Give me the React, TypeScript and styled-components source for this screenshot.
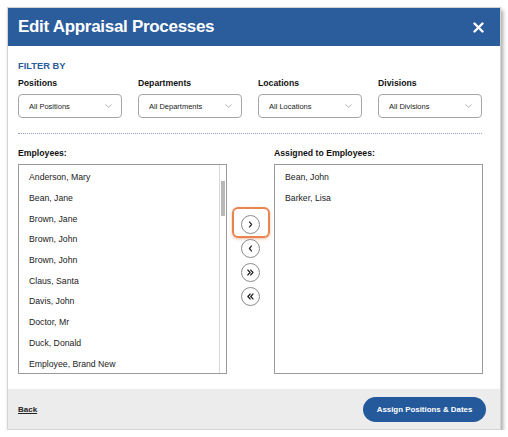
import styled, { createGlobalStyle } from 'styled-components';

const employees = [
  'Anderson, Mary', 'Bean, Jane', 'Brown, Jane', 'Brown, John', 'Brown, John',
  'Claus, Santa', 'Davis, John', 'Doctor, Mr', 'Duck, Donald', 'Employee, Brand New',
];

const assigned = ['Bean, John', 'Barker, Lisa'];

const filters = [
  { label: 'Positions', value: 'All Positions' },
  { label: 'Departments', value: 'All Departments' },
  { label: 'Locations', value: 'All Locations' },
  { label: 'Divisions', value: 'All Divisions' },
];

// chevron paths for the move buttons: add one, remove one, add all, remove all
const moves = [
  'M8.3 6.7 L10.7 9.5 L8.3 12.3',
  'M10.7 6.7 L8.3 9.5 L10.7 12.3',
  'M6.6 6.8 L9 9.5 L6.6 12.2 M9.8 6.8 L12.2 9.5 L9.8 12.2',
  'M9 6.8 L6.6 9.5 L9 12.2 M12.2 6.8 L9.8 9.5 L12.2 12.2',
];

function App() {
  return (
    <>
      <GlobalStyle />
      <Dialog>
        <Header>
          <Title>Edit Appraisal Processes</Title>
          <CloseButton aria-label="Close">
            <svg width="11" height="11" viewBox="0 0 11 11">
              <path d="M1.5 1.5 L9.5 9.5 M9.5 1.5 L1.5 9.5" stroke="#fff" strokeWidth="2.4" strokeLinecap="round" />
            </svg>
          </CloseButton>
        </Header>

        <Body>
          <FilterTitle>FILTER BY</FilterTitle>
          <FilterRow>
            {filters.map((f) => (
              <FilterGroup key={f.label}>
                <FieldLabel>{f.label}</FieldLabel>
                <Select>
                  <span>{f.value}</span>
                  <svg width="7" height="4" viewBox="0 0 7 4">
                    <path d="M0.5 0.5 L3.5 3.3 L6.5 0.5" fill="none" stroke="#aaa" strokeWidth="0.9" />
                  </svg>
                </Select>
              </FilterGroup>
            ))}
          </FilterRow>

          <Divider />

          <Transfer>
            <Column>
              <FieldLabel>Employees:</FieldLabel>
              <ListBox>
                {employees.map((name, i) => (
                  <Item key={i}>{name}</Item>
                ))}
                <ScrollTrack>
                  <ScrollThumb />
                </ScrollTrack>
              </ListBox>
            </Column>

            <MoveButtons>
              {moves.map((d, i) => (
                <MoveSlot key={i}>
                  <MoveButton>
                    <svg width="17" height="17" viewBox="0 0 19 19">
                      <path d={d} fill="none" stroke="#222" strokeWidth={i < 2 ? 1.3 : 1.5} strokeLinecap="round" strokeLinejoin="round" />
                    </svg>
                  </MoveButton>
                  {i === 0 && <Highlight />}
                </MoveSlot>
              ))}
            </MoveButtons>

            <Column>
              <FieldLabel>Assigned to Employees:</FieldLabel>
              <ListBox>
                {assigned.map((name) => (
                  <Item key={name}>{name}</Item>
                ))}
              </ListBox>
            </Column>
          </Transfer>
        </Body>

        <Footer>
          <BackLink>Back</BackLink>
          <PrimaryButton>Assign Positions &amp; Dates</PrimaryButton>
        </Footer>
      </Dialog>
    </>
  );
}

const GlobalStyle = createGlobalStyle`
  body {
    margin: 0;
    background: #fff;
    font-family: "Liberation Sans", Arial, sans-serif;
  }
`;

const Dialog = styled.div`
  width: 494px;
  height: 423px;
  margin: 7px 0 0 7px;
  display: flex;
  flex-direction: column;
  background: #fff;
  border: 1px solid #d4d4d4;
  box-sizing: border-box;
  box-shadow: 2px 3px 4px rgba(0, 0, 0, 0.35);
`;

const Header = styled.div`
  height: 38px;
  flex-shrink: 0;
  display: flex;
  align-items: center;
  justify-content: space-between;
  padding: 0 16px 0 10px;
  background: #2b5c9c;
`;

const Title = styled.h1`
  margin: 0;
  color: #fff;
  font-size: 17px;
  font-weight: 700;
  letter-spacing: -0.3px;
`;

const CloseButton = styled.div`
  display: flex;
  align-items: center;
  cursor: pointer;
`;

const Body = styled.div`
  flex: 1;
  display: flex;
  flex-direction: column;
  padding: 14px 18px 0 10px;
`;

const FilterTitle = styled.div`
  color: #2b5c9c;
  font-size: 9.3px;
  font-weight: 700;
  line-height: 13px;
`;

const FilterRow = styled.div`
  display: grid;
  grid-template-columns: repeat(4, 104px);
  column-gap: 16px;
  margin-top: 4px;
`;

const FilterGroup = styled.div`
  display: flex;
  flex-direction: column;
`;

const FieldLabel = styled.div`
  color: #111;
  font-size: 8.7px;
  font-weight: 700;
  line-height: 12px;
`;

const Select = styled.div`
  height: 24px;
  margin-top: 5px;
  display: flex;
  align-items: center;
  justify-content: space-between;
  padding: 0 9px 0 10px;
  border: 1px solid #a6a6a6;
  border-radius: 4px;
  box-sizing: border-box;
  font-size: 7.5px;
  color: #222;
`;

const Divider = styled.div`
  margin-top: 15px;
  border-top: 1px dotted #8ea4c0;
`;

const Transfer = styled.div`
  display: grid;
  grid-template-columns: 209px 47px 209px;
  margin-top: 13px;
`;

const Column = styled.div`
  display: flex;
  flex-direction: column;
  gap: 5px;
`;

const ListBox = styled.div`
  position: relative;
  height: 210px;
  box-sizing: border-box;
  border: 1px solid #9a9a9a;
  padding: 2px 0 0 10px;
  overflow: hidden;
`;

const ScrollTrack = styled.div`
  position: absolute;
  top: 0;
  right: 0;
  bottom: 0;
  width: 6px;
  background: #fff;
  border-left: 1px solid #d9d9d9;
`;

const ScrollThumb = styled.div`
  margin: 16px 1px 0 1px;
  height: 35px;
  background: #b9b9b9;
`;

const Item = styled.div`
  height: 20.7px;
  display: flex;
  align-items: center;
  font-size: 8.7px;
  color: #222;
  white-space: nowrap;
`;

const MoveButtons = styled.div`
  display: flex;
  flex-direction: column;
  align-items: center;
  gap: 5px;
  padding-top: 68px;
`;

const MoveSlot = styled.div`
  position: relative;
  display: flex;
`;

const MoveButton = styled.div`
  width: 19px;
  height: 19px;
  box-sizing: border-box;
  border: 1px solid #8c8c8c;
  border-radius: 50%;
  background: #fff;
  display: flex;
  align-items: center;
  justify-content: center;
  cursor: pointer;
`;

const Highlight = styled.div`
  position: absolute;
  left: -9px;
  top: -8px;
  width: 38px;
  height: 31px;
  box-sizing: border-box;
  border: 2px solid #e8844f;
  border-radius: 6px;
  box-shadow: 0 1px 3px rgba(232, 132, 79, 0.5);
`;

const Footer = styled.div`
  height: 40px;
  flex-shrink: 0;
  display: flex;
  align-items: center;
  justify-content: space-between;
  padding: 0 14px 0 10px;
  background: #ececec;
`;

const BackLink = styled.span`
  font-size: 8px;
  font-weight: 700;
  color: #222;
  text-decoration: underline;
  cursor: pointer;
`;

const PrimaryButton = styled.button`
  width: 123px;
  height: 25px;
  border: none;
  border-radius: 13px;
  background: #245a9c;
  color: #fff;
  font-family: inherit;
  font-size: 7.9px;
  font-weight: 700;
  cursor: pointer;
`;

export default App;
